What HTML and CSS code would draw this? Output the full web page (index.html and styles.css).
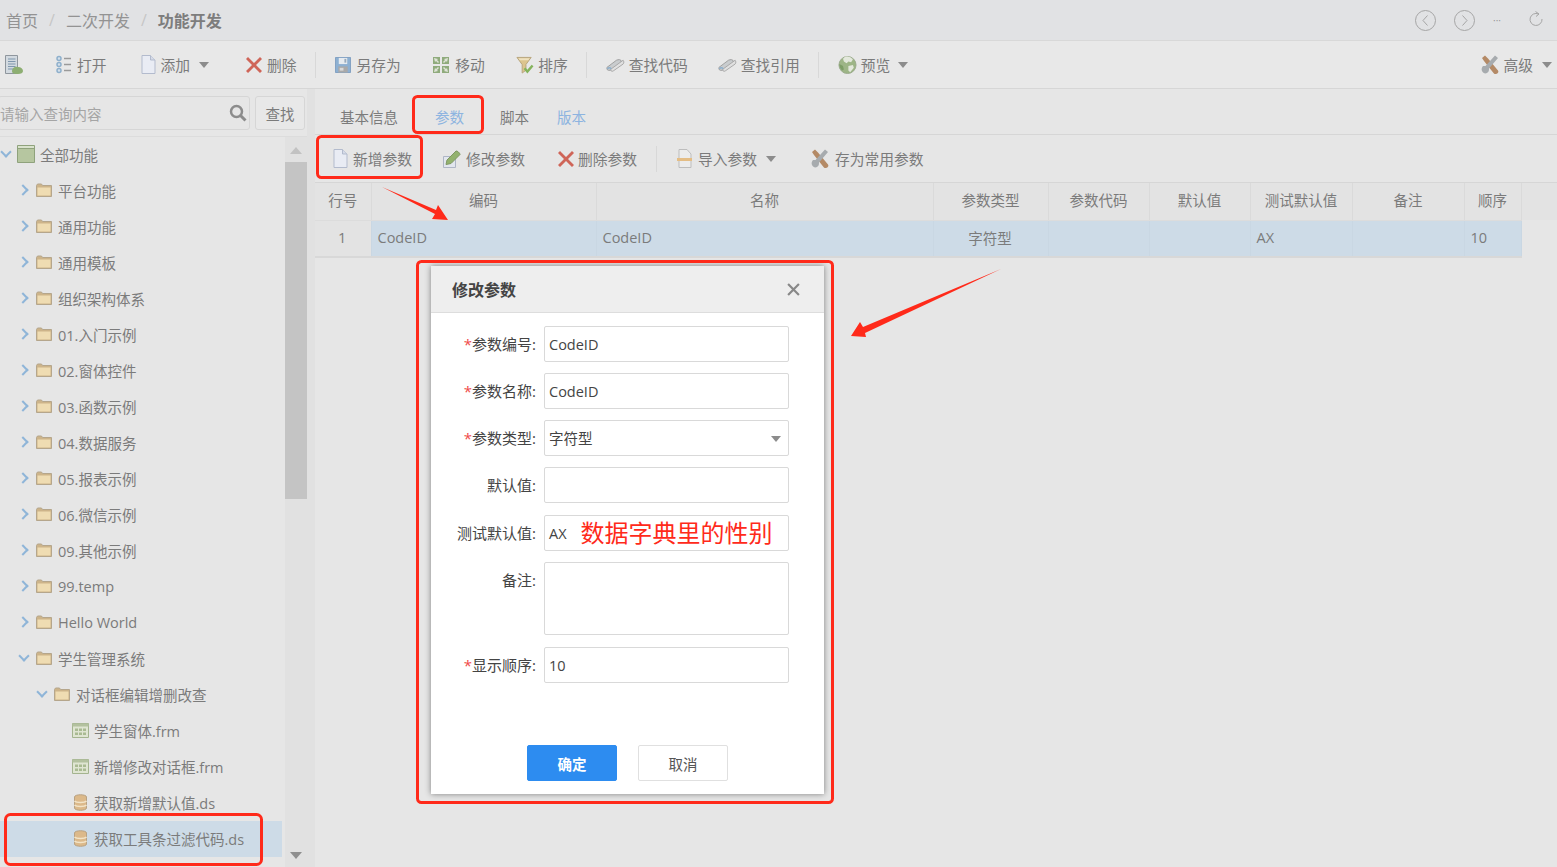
FILE: index.html
```html
<!DOCTYPE html>
<html lang="en">
<head>
    <meta charset="UTF-8">
    <title>功能开发</title>
    <link rel="stylesheet" href="styles.css">
</head>
<body>

    <svg class="icon-defs" width="0" height="0">
        <symbol id="i-doc" viewBox="0 0 15 19"><path d="M1 .5h8.500L14 5v13.500H1z" fill="#e9ecf4" stroke="#b3bbcd"/><path d="M9.500.5V5H14" fill="#d6dbe8" stroke="#b3bbcd"/></symbol>
        <symbol id="i-cross" viewBox="0 0 18 18"><path d="M1 3 3 1l6 6 6-6 2 2-6 6 6 6-2 2-6-6-6 6-2-2 6-6z" fill="#cf6558"/></symbol>
        <symbol id="i-list" viewBox="0 0 15 19"><g fill="#d5e0ea" stroke="#8fb0cc" stroke-width="1.500"><circle cx="3" cy="3.500" r="2"/><circle cx="3" cy="9.500" r="2"/><circle cx="3" cy="15.500" r="2"/></g><path d="M8 3.500h7M8 9.500h7M8 15.500h7" stroke="#9a9a9a" stroke-width="1.500"/></symbol>
        <symbol id="i-report" viewBox="0 0 18 20"><path d="M.5.5h12v18H.5z" fill="#d3dae0" stroke="#8f969d"/><path d="M3 4h7.500M3 6.500h7.500M3 9h7.500M3 11.500h7.500M3 14h5" stroke="#7f97ad"/><path d="M7 16c0-3 3-5 6-4 3 0 5 2 5 4s-2 3-5 3-6 0-6-3z" fill="#8dae72"/></symbol>
        <symbol id="i-save" viewBox="0 0 17 17"><path d="M.5.5h16v16H.5z" fill="#8db0d2" stroke="#7f9fc0"/><path d="M4 1h9v6.500H4z" fill="#e6ebf0"/><path d="M10 2h2v4h-2z" fill="#9ab"/><path d="M3.500 10h10v6.500h-10z" fill="#a9a9a9"/><path d="M5 11.500h4v3H5z" fill="#d8d8d8"/></symbol>
        <symbol id="i-move" viewBox="0 0 18 18"><g fill="#8fab7c"><path d="M1 1h7v7H1zM10 1h7v7h-7zM1 10h7v7H1zM10 10h7v7h-7z"/></g><g fill="#dfe4d8"><path d="m2 2 4 1-1 1 2 2-1 1-2-2-1 1zM16 2l-1 4-1-1-2 2-1-1 2-2-1-1zM2 16l1-4 1 1 2-2 1 1-2 2 1 1zM16 16l-4-1 1-1-2-2 1-1 2 2 1-1z"/></g></symbol>
        <symbol id="i-funnel" viewBox="0 0 18 19"><path d="M.5 1.500h15L10 9v6l-4 3V9z" fill="#dcc48e" stroke="#b6a47c"/><path d="M2 2.500h12l-1.500 2h-9z" fill="#efe2c0"/><path d="m8.500 13 3 3.500L17 10" fill="none" stroke="#84b35c" stroke-width="2.500"/></symbol>
        <symbol id="i-pens" viewBox="0 0 20 16"><path d="M1 10.500 11 3c2-1 5-1 5 1s-1 2-2 3L6 13c-2 1-5 1-5-1z" fill="#c9ccce" stroke="#9d9d9d"/><path d="M5 12.500 18 3c1 1 1 3 0 4L8 14c-1 1-3 1-3-1.500z" fill="#e0e0e0" stroke="#a6a6a6"/><path d="M1.500 12c1-1.500 3-1.500 4 0" fill="none" stroke="#8fb0cc" stroke-width="1.500"/></symbol>
        <symbol id="i-globe" viewBox="0 0 20 20"><circle cx="10" cy="10" r="9.500" fill="#9db586" stroke="#98a88a"/><path d="M7 1c3-1 7 0 9 3l-2 3-3-1-2 2-3-2-1-3z" fill="#e3e8dc"/><path d="M11 11l5-1 1 3-4 5-2-2z" fill="#e3e8dc"/><path d="M1 9l4 2 1 4-2 1c-2-2-3-4-3-7z" fill="#7d9e66"/></symbol>
        <symbol id="i-tools" viewBox="0 0 18 20"><path d="M1 3 4 .5l3 3 10 12c1 1 0 3-2 3.500-1 0-2 0-2.500-1L3 6z" fill="#b48a66"/><path d="M17 3 14 .5 4.500 11 2 11c-1 1-2 3-1 5s3 3 5 2 2-3 2-4.500z" fill="#a7abae"/></symbol>
        <symbol id="i-edit" viewBox="0 0 18 18"><path d="M.5 6.500h12v11H.5z" fill="#e2e6ee" stroke="#aeb5c5"/><path d="m4 10 9-9c1-.5 4 2 4 3.500l-9 9-5 1z" fill="#93b26e" stroke="#7f9763"/></symbol>
        <symbol id="i-import" viewBox="0 0 15 19"><path d="M2 .5h8L14 5v13.500H2z" fill="#ececec" stroke="#bdbdbd"/><path d="M0 9h15v3H0z" fill="#e4bd85"/></symbol>
        <symbol id="i-search" viewBox="0 0 18 18"><circle cx="7.500" cy="7.500" r="5.500" fill="none" stroke="#8c8c8c" stroke-width="2.500"/><path d="m11.500 11.500 5 5" stroke="#8c8c8c" stroke-width="3"/></symbol>
        <symbol id="i-folder" viewBox="0 0 16 14"><path d="M.5 2.500 1.500 1h4l1 1.500h9v11H.5z" fill="#cdb48a" stroke="#b5a68c"/><path d="M1.500 4.500h13v8h-13z" fill="#efdcb2"/></symbol>
        <symbol id="i-root" viewBox="0 0 18 18"><path d="M.5.5h17v17H.5z" fill="#b6c6a0" stroke="#8fa27c"/><path d="M.5 3.500h17" stroke="#8fa27c"/><path d="M1 1h16v2H1z" fill="#d9e2cc"/></symbol>
        <symbol id="i-form" viewBox="0 0 17 15"><path d="M.5.5h16v14H.5z" fill="#dfe5d2" stroke="#a4b48f"/><path d="M.5.500h16v3H.5z" fill="#b3c19f"/><path d="M3 5.500h3V8H3zM7 5.500h3V8H7zM11 5.500h3V8h-3zM3 9.500h3V12H3zM7 9.500h3V12H7zM11 9.500h3V12h-3z" fill="#a9ba92"/></symbol>
        <symbol id="i-db" viewBox="0 0 14 17"><path d="M1 3c0-3 12-3 12 0v11c0 3-12 3-12 0z" fill="#dcb98a" stroke="#b8a283"/><path d="M1 7c2 2 10 2 12 0M1 11c2 2 10 2 12 0" fill="none" stroke="#f2e4c8" stroke-width="1.500"/></symbol>
    </svg>

    <header class="crumbs">
        <span class="crumb">首页</span>
        <span class="crumb-sep">/</span>
        <span class="crumb">二次开发</span>
        <span class="crumb-sep">/</span>
        <span class="crumb crumb-active">功能开发</span>
        <div class="crumb-tools">
            <svg class="round-btn" viewBox="0 0 21 21"><circle cx="10.500" cy="10.500" r="10" fill="none" stroke="#a5a5a5"/><path d="M12.500 5.500 8 10.500l4.500 5" fill="none" stroke="#a5a5a5"/></svg>
            <svg class="round-btn" viewBox="0 0 21 21"><circle cx="10.500" cy="10.500" r="10" fill="none" stroke="#a5a5a5"/><path d="m8.500 5.500 4.500 5-4.500 5" fill="none" stroke="#a5a5a5"/></svg>
            <span class="more-dots">···</span>
            <svg class="refresh" viewBox="0 0 14 15"><path d="M9.500 3A6 6 0 1 0 13 8" fill="none" stroke="#a5a5a5"/><path d="M6.500.5 10 3 7 5.500" fill="none" stroke="#a5a5a5"/></svg>
        </div>
    </header>

    <nav class="toolbar">
        <a class="tool tool-first"><svg class="ic ic-18 ic-tall"><use href="#i-report"/></svg></a>
        <a class="tool"><svg class="ic ic-15"><use href="#i-list"/></svg>打开</a>
        <a class="tool tool-drop tool-add"><svg class="ic ic-15"><use href="#i-doc"/></svg>添加<i class="caret"></i></a>
        <a class="tool tool-del"><svg class="ic ic-18"><use href="#i-cross"/></svg>删除</a>
        <span class="tool-sep"></span>
        <a class="tool"><svg class="ic ic-16"><use href="#i-save"/></svg>另存为</a>
        <a class="tool tool-wide tool-mid"><svg class="ic ic-18"><use href="#i-move"/></svg>移动</a>
        <a class="tool tool-wide tool-tight"><svg class="ic ic-18"><use href="#i-funnel"/></svg>排序</a>
        <span class="tool-sep"></span>
        <a class="tool tool-tight"><svg class="ic ic-19"><use href="#i-pens"/></svg>查找代码</a>
        <a class="tool tool-tight"><svg class="ic ic-19"><use href="#i-pens"/></svg>查找引用</a>
        <span class="tool-sep"></span>
        <a class="tool tool-tight tool-drop"><svg class="ic ic-19"><use href="#i-globe"/></svg>预览<i class="caret"></i></a>
        <a class="tool tool-right tool-drop"><svg class="ic ic-18 ic-tall"><use href="#i-tools"/></svg>高级<i class="caret"></i></a>
    </nav>

    <main class="main">
        <aside class="side">
            <div class="search-row">
                <div class="search-box">
                    <span class="search-hint">请输入查询内容</span>
                    <svg class="ic ic-18"><use href="#i-search"/></svg>
                </div>
                <button class="search-btn">查找</button>
            </div>
            <div class="tree-wrap">
                <ul class="tree">
                    <li class="node lv0"><i class="arrow open"></i><svg class="ic ic-18"><use href="#i-root"/></svg>全部功能</li>
                    <li class="node lv1"><i class="arrow"></i><svg class="ic ic-16"><use href="#i-folder"/></svg>平台功能</li>
                    <li class="node lv1"><i class="arrow"></i><svg class="ic ic-16"><use href="#i-folder"/></svg>通用功能</li>
                    <li class="node lv1"><i class="arrow"></i><svg class="ic ic-16"><use href="#i-folder"/></svg>通用模板</li>
                    <li class="node lv1"><i class="arrow"></i><svg class="ic ic-16"><use href="#i-folder"/></svg>组织架构体系</li>
                    <li class="node lv1"><i class="arrow"></i><svg class="ic ic-16"><use href="#i-folder"/></svg>01.入门示例</li>
                    <li class="node lv1"><i class="arrow"></i><svg class="ic ic-16"><use href="#i-folder"/></svg>02.窗体控件</li>
                    <li class="node lv1"><i class="arrow"></i><svg class="ic ic-16"><use href="#i-folder"/></svg>03.函数示例</li>
                    <li class="node lv1"><i class="arrow"></i><svg class="ic ic-16"><use href="#i-folder"/></svg>04.数据服务</li>
                    <li class="node lv1"><i class="arrow"></i><svg class="ic ic-16"><use href="#i-folder"/></svg>05.报表示例</li>
                    <li class="node lv1"><i class="arrow"></i><svg class="ic ic-16"><use href="#i-folder"/></svg>06.微信示例</li>
                    <li class="node lv1"><i class="arrow"></i><svg class="ic ic-16"><use href="#i-folder"/></svg>09.其他示例</li>
                    <li class="node lv1"><i class="arrow"></i><svg class="ic ic-16"><use href="#i-folder"/></svg>99.temp</li>
                    <li class="node lv1"><i class="arrow"></i><svg class="ic ic-16"><use href="#i-folder"/></svg>Hello World</li>
                    <li class="node lv1"><i class="arrow open"></i><svg class="ic ic-16"><use href="#i-folder"/></svg>学生管理系统</li>
                    <li class="node lv2"><i class="arrow open"></i><svg class="ic ic-16"><use href="#i-folder"/></svg>对话框编辑增删改查</li>
                    <li class="node lv3"><svg class="ic ic-17"><use href="#i-form"/></svg>学生窗体.frm</li>
                    <li class="node lv3"><svg class="ic ic-17"><use href="#i-form"/></svg>新增修改对话框.frm</li>
                    <li class="node lv3"><svg class="ic ic-17"><use href="#i-db"/></svg>获取新增默认值.ds</li>
                    <li class="node lv3 selected"><svg class="ic ic-17"><use href="#i-db"/></svg>获取工具条过滤代码.ds</li>
                </ul>
                <div class="scrollbar">
                    <i class="scroll-up"></i>
                    <div class="scroll-thumb"></div>
                    <i class="scroll-down"></i>
                </div>
            </div>
        </aside>

        <div class="split"></div>

        <section class="content">
            <div class="tabs">
                <span class="tab tab-first">基本信息</span>
                <span class="tab tab-blue">参数</span>
                <span class="tab">脚本</span>
                <span class="tab tab-blue tab-last">版本</span>
            </div>
            <div class="subbar">
                <a class="sub sub-add"><svg class="ic ic-15"><use href="#i-doc"/></svg>新增参数</a>
                <a class="sub sub-edit"><svg class="ic ic-18"><use href="#i-edit"/></svg>修改参数</a>
                <a class="sub sub-del"><svg class="ic ic-18"><use href="#i-cross"/></svg>删除参数</a>
                <span class="tool-sep sub-sep"></span>
                <a class="sub sub-import"><svg class="ic ic-15"><use href="#i-import"/></svg>导入参数<i class="caret"></i></a>
                <a class="sub sub-common"><svg class="ic ic-18 ic-tall"><use href="#i-tools"/></svg>存为常用参数</a>
            </div>
            <table class="grid">
                <colgroup>
                    <col class="c-no"><col class="c-code"><col class="c-name"><col class="c-type"><col class="c-pcode"><col class="c-def"><col class="c-test"><col class="c-note"><col class="c-order"><col>
                </colgroup>
                <thead>
                    <tr><th>行号</th><th>编码</th><th>名称</th><th>参数类型</th><th>参数代码</th><th>默认值</th><th>测试默认值</th><th>备注</th><th>顺序</th><th class="blank"></th></tr>
                </thead>
                <tbody>
                    <tr>
                        <td class="row-no">1</td><td>CodeID</td><td>CodeID</td><td class="mid">字符型</td><td></td><td></td><td>AX</td><td></td><td>10</td><td class="blank"></td>
                    </tr>
                </tbody>
            </table>
        </section>
    </main>

    <div class="dialog">
        <div class="dialog-head">
            <span class="dialog-title">修改参数</span>
            <svg class="dialog-close" viewBox="0 0 12 12"><path d="m1 1 10 10M11 1 1 11" stroke="#888" stroke-width="2"/></svg>
        </div>
        <div class="dialog-body">
            <div class="form-row"><label><em>*</em>参数编号:</label><div class="field">CodeID</div></div>
            <div class="form-row"><label><em>*</em>参数名称:</label><div class="field">CodeID</div></div>
            <div class="form-row"><label><em>*</em>参数类型:</label><div class="field field-select">字符型<i class="caret"></i></div></div>
            <div class="form-row"><label>默认值:</label><div class="field"></div></div>
            <div class="form-row form-row-test"><label>测试默认值:</label><div class="field">AX<span class="note-red">数据字典里的性别</span></div></div>
            <div class="form-row"><label>备注:</label><div class="field field-area"></div></div>
            <div class="form-row form-row-order"><label><em>*</em>显示顺序:</label><div class="field">10</div></div>
            <div class="dialog-foot">
                <button class="btn btn-ok">确定</button>
                <button class="btn">取消</button>
            </div>
        </div>
    </div>

    <svg class="marks" viewBox="0 0 1557 867">
        <g fill="none" stroke="#ff2a1a" stroke-width="3">
            <rect x="413.500" y="96.500" width="69" height="36" rx="4"/>
            <rect x="317.500" y="136.500" width="104" height="41" rx="4"/>
            <rect x="417.500" y="261.500" width="415" height="541" rx="4"/>
            <rect x="5.500" y="814.500" width="256" height="50" rx="5"/>
        </g>
        <path d="M382 187 436 210 438 205 448 220 432 219 435 214z" fill="#ff2a1a"/>
        <path d="M1001 269 863 327 860 322 851 336 866 337 865 333z" fill="#ff2a1a"/>
    </svg>

</body>
</html>
```

FILE: styles.css
```css
* {
    padding: 0;
    margin: 0;
    box-sizing: border-box;
}

body {
    width: 1557px;
    height: 867px;
    overflow: hidden;
    position: relative;
    background-color: #e6e6e6;
    color: #7b7b7b;
    font-family: "Open Sans", "Noto Sans CJK SC", sans-serif;
    font-size: 14.500px;
}

.icon-defs {
    position: absolute;
}

.ic {
    display: block;
    flex: none;
}

.ic-15 { width: 15px; height: 19px; }
.ic-16 { width: 16px; height: 16px; }
.ic-17 { width: 17px; height: 17px; }
.ic-18 { width: 18px; height: 18px; }
.ic-19 { width: 19px; height: 18px; }
.ic-tall { height: 20px; }

.caret {
    display: block;
    width: 0;
    height: 0;
    border-left: 5.500px solid transparent;
    border-right: 5.500px solid transparent;
    border-top: 6px solid #8c8c8c;
}

/* breadcrumb */
.crumbs {
    height: 41px;
    padding-left: 6px;
    display: flex;
    align-items: center;
    background-color: #e1e2e4;
    border-bottom: 1px solid #d8d8d8;
    font-size: 16px;
    color: #939393;
}

.crumb-sep {
    margin: 0 11px;
    color: #c6c6c6;
}

.crumb-active {
    font-weight: bold;
    color: #7d7d7d;
}

.crumb-tools {
    margin-left: auto;
    display: flex;
    align-items: center;
}

.round-btn {
    width: 21px;
    height: 21px;
    margin-right: 18px;
}

.more-dots {
    width: 10px;
    margin-right: 26px;
    font-size: 10px;
    line-height: 10px;
    color: #999;
}

.refresh {
    width: 14px;
    height: 15px;
    margin-right: 14px;
    margin-top: -3px;
}

/* main toolbar */
.toolbar {
    height: 48px;
    display: flex;
    align-items: center;
    background-color: #e8e8e8;
    border-bottom: 1px solid #d6d6d6;
}

.tool {
    display: flex;
    align-items: center;
    gap: 6px;
    padding: 0 15px;
    white-space: nowrap;
    font-size: 14.750px;
}

.tool-first {
    padding: 0 18px 0 5px;
}

.tool-add {
    margin-left: 4px;
    gap: 5px;
    padding-right: 21px;
}

.tool-del {
    gap: 4px;
}

.tool-wide {
    margin-left: 1.500px;
}

.tool-mid {
    gap: 5px;
}

.tool-tight {
    gap: 4px;
}

.tool-drop .caret {
    margin-left: 4px;
}

.tool-sep {
    width: 1px;
    height: 26px;
    margin: 0 4px 0 3px;
    background-color: #d8d8d8;
}

.tool-right {
    margin-left: auto;
    padding: 0 5px 0 0;
    gap: 5px;
}

/* left tree */
.main {
    height: 778px;
    display: flex;
}

.side {
    width: 307px;
    flex: none;
}

.search-row {
    height: 48px;
    padding: 7px 2px 0 0;
    display: flex;
    gap: 5px;
    border-bottom: 1px solid #dcdcdc;
}

.search-box {
    width: 252px;
    height: 34px;
    margin-left: -2px;
    padding: 0 2px 0 1px;
    display: flex;
    align-items: center;
    justify-content: space-between;
    border: 1px solid #d6d6d6;
    border-radius: 3px;
}

.search-hint {
    color: #a5a5a5;
}

.search-btn {
    width: 50px;
    height: 34px;
    background-color: #e8e8e8;
    border: 1px solid #d6d6d6;
    border-radius: 3px;
    color: #7b7b7b;
    font: inherit;
}

.tree-wrap {
    display: flex;
    height: 730px;
}

.tree {
    width: 285px;
    list-style: none;
}

.node {
    height: 36px;
    padding-bottom: 2px;
    display: flex;
    align-items: center;
    white-space: nowrap;
    gap: 6px;
}

.lv0 { padding-left: 0; gap: 5px; }
.lv1 { padding-left: 18px; }
.lv2 { padding-left: 36px; }
.lv3 { padding-left: 72px; gap: 5px; }

.selected {
    width: 282px;
    background-color: #cddbe7;
}

.arrow {
    display: block;
    width: 12px;
    height: 12px;
    position: relative;
    flex: none;
}

.arrow::before {
    content: "";
    position: absolute;
    left: 1px;
    top: 2px;
    width: 6px;
    height: 6px;
    border-right: 2.500px solid #8fb5d8;
    border-top: 2.500px solid #8fb5d8;
    transform: rotate(45deg);
}

.arrow.open::before {
    transform: rotate(135deg);
    left: 2px;
    top: 0;
}

.scrollbar {
    width: 22px;
    height: 100%;
    background-color: #e1e1e1;
    display: flex;
    flex-direction: column;
    align-items: center;
}

.scroll-up {
    margin-top: 10px;
    border-left: 6px solid transparent;
    border-right: 6px solid transparent;
    border-bottom: 7px solid #c2c2c2;
}

.scroll-thumb {
    width: 22px;
    height: 337px;
    margin-top: 8px;
    background-color: #c4c4c4;
}

.scroll-down {
    margin-top: 353px;
    border-left: 6px solid transparent;
    border-right: 6px solid transparent;
    border-top: 7px solid #8f8f8f;
}

.split {
    width: 8px;
    flex: none;
    background-color: #e1e1e1;
}

/* right side */
.content {
    flex: 1;
    min-width: 0;
}

.tabs {
    height: 46px;
    padding: 15px 0 0 25px;
    display: flex;
    line-height: 28px;
    border-bottom: 1px solid #d6d6d6;
}

.tab {
    margin-right: 36px;
}

.tab-first {
    margin-right: 37px;
}

.tab-blue {
    color: #8db4e0;
}

.tab:nth-child(3) {
    margin-right: 28px;
}

.subbar {
    height: 48px;
    display: flex;
    align-items: center;
    border-bottom: 1px solid #d6d6d6;
}

.sub {
    display: flex;
    align-items: center;
    gap: 6px;
    white-space: nowrap;
    font-size: 14.750px;
}

.sub-add {
    margin-left: 18px;
    gap: 5px;
}

.sub-edit {
    margin-left: 31px;
    gap: 5px;
}

.sub-del {
    margin-left: 32px;
    gap: 3px;
}

.sub-sep {
    margin: 0 20px 0 19px;
}

.sub-import .caret {
    margin-left: 3px;
}

.sub-common {
    margin-left: 35px;
}

.grid {
    width: 100%;
    table-layout: fixed;
    border-collapse: collapse;
}

.c-no { width: 56px; }
.c-code { width: 225px; }
.c-name { width: 337px; }
.c-type { width: 115px; }
.c-pcode { width: 101px; }
.c-def { width: 101px; }
.c-test { width: 102px; }
.c-note { width: 112px; }
.c-order { width: 57px; }

.grid th {
    height: 37px;
    padding: 0 0 3px;
    font-weight: normal;
    background-color: #e3e3e3;
    border-right: 1px solid #dadada;
    border-bottom: 1px solid #dcdcdc;
}

.grid td {
    height: 37px;
    padding: 0 7px 2px 6px;
    background-color: #cddbe7;
    border-right: 1px solid #c9d7e3;
    border-bottom: 2px solid #d8d8d8;
}

.grid .row-no {
    text-align: center;
    background-color: #e3e3e3;
}

.grid .mid {
    text-align: center;
}

.grid .blank {
    border: none;
}

.grid td.blank {
    background-color: transparent;
}

/* dialog */
.dialog {
    position: absolute;
    left: 431px;
    top: 266px;
    width: 393px;
    height: 528px;
    background-color: #fff;
    box-shadow: 0 0 6px rgba(0, 0, 0, 0.45);
    color: #444;
}

.dialog-head {
    height: 47px;
    padding: 0 24px 0 21px;
    display: flex;
    align-items: center;
    justify-content: space-between;
    background-color: #eee;
    border-bottom: 1px solid #ddd;
}

.dialog-title {
    font-size: 16px;
    font-weight: bold;
}

.dialog-close {
    width: 13px;
    height: 13px;
}

.dialog-body {
    padding-top: 13px;
}

.form-row {
    display: flex;
    margin-bottom: 11px;
}

.form-row-test {
    margin-top: 12px;
}

.form-row-order {
    margin-top: 12px;
}

.form-row label {
    width: 113px;
    height: 36px;
    padding-right: 8px;
    flex: none;
    text-align: right;
    line-height: 37px;
    font-size: 15px;
    white-space: nowrap;
}

.form-row em {
    color: #f04a4a;
    font-style: normal;
}

.field {
    width: 245px;
    height: 36px;
    padding-left: 4px;
    position: relative;
    line-height: 35px;
    border: 1px solid #d9d9d9;
    border-radius: 2px;
    background-color: #fff;
}

.field-select .caret {
    position: absolute;
    right: 7px;
    top: 15px;
}

.field-area {
    height: 73px;
}

.note-red {
    margin-left: 14px;
    color: #ff2a1a;
    font-size: 24px;
    line-height: 33px;
    vertical-align: top;
}

.dialog-foot {
    margin-top: 62px;
    display: flex;
    justify-content: center;
    gap: 21px;
}

.btn {
    width: 90px;
    height: 36px;
    background-color: #fff;
    border: 1px solid #e0e0e0;
    border-radius: 2px;
    color: #555;
    font: inherit;
    font-size: 14.500px;
}

.btn-ok {
    background-color: #2d8cf0;
    border-color: #2d8cf0;
    color: #fff;
    font-weight: bold;
}

/* red hand-drawn marks over the screenshot */
.marks {
    position: absolute;
    left: 0;
    top: 0;
    width: 1557px;
    height: 867px;
    pointer-events: none;
}
```
